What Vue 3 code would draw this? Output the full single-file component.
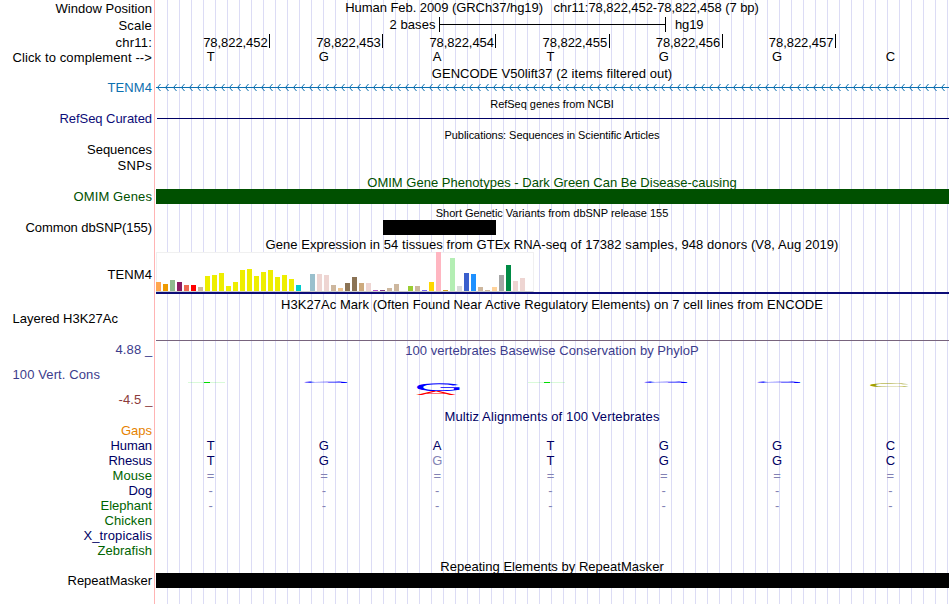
<script setup>
const genome = ['T', 'G', 'A', 'T', 'G', 'G', 'C']
const coords = ['78,822,452', '78,822,453', '78,822,454', '78,822,455', '78,822,456', '78,822,457']
const position = 'Human Feb. 2009 (GRCh37/hg19)   chr11:78,822,452-78,822,458 (7 bp)'

// Spreads a line of text over the given advance width.
const vFit = {
  mounted(el, { value }) {
    if (!value) return
    const natural = el.getBoundingClientRect().width
    const count = el.textContent.length
    el.style.letterSpacing = `${(value - natural) / count}px`
  },
}

const arrows = Array.from({ length: 100 }, (_, i) => {
  const x = 1.5 + i * 8
  return `M${x + 3} 4l-3 3.5l3 3.5`
}).join('')

const species = [
  { name: 'Gaps', w: 31, tone: 'orange', cells: [] },
  { name: 'Human', w: 41.5, tone: 'navy', cells: genome },
  { name: 'Rhesus', w: 43.5, tone: 'navy', cells: ['T', 'G', 'g', 'T', 'G', 'G', 'C'] },
  { name: 'Mouse', w: 39.5, tone: 'forest', cells: Array(7).fill('=') },
  { name: 'Dog', w: 23.5, tone: 'navy', cells: Array(7).fill('-') },
  { name: 'Elephant', w: 51.5, tone: 'forest', cells: Array(7).fill('-') },
  { name: 'Chicken', w: 47.5, tone: 'forest', cells: [] },
  { name: 'X_tropicalis', w: 68.5, tone: 'navy', cells: [] },
  { name: 'Zebrafish', w: 54.5, tone: 'forest', cells: [] },
]

// Tissue expression: [height, colour] in display order.
const tissues = [
  [9, '#ffa54f'], [7, '#ee9a00'], [11, '#8fbc8f'], [9, '#8b1c62'], [6, '#ee6a50'], [6, '#ff0000'],
  [4, '#cdb79e'], [15, '#eeee00'], [16, '#eeee00'], [18, '#eeee00'], [5, '#eeee00'], [9, '#eeee00'],
  [21, '#eeee00'], [22, '#eeee00'], [15, '#eeee00'], [19, '#eeee00'], [21, '#eeee00'], [14, '#eeee00'],
  [16, '#eeee00'], [12, '#eeee00'], [6, '#00cdcd'], [0, '#ee82ee'], [17, '#9ac0cd'], [17, '#eed5d2'],
  [16, '#eed5d2'], [6, '#cdb79e'], [3, '#eec591'], [8, '#8b7355'], [14, '#8b7355'], [8, '#cdaa7d'],
  [8, '#eed5d2'], [1, '#b452cd'], [1, '#7a378b'], [3, '#cdb79e'], [7, '#cdb79e'], [0, '#cdb79e'],
  [5, '#9acd32'], [5, '#cdb79e'], [1, '#7a67ee'], [9, '#ffd700'], [39, '#ffb6c1'], [1, '#cd9b1d'],
  [33, '#b4eeb4'], [5, '#d9d9d9'], [18, '#3a5fcd'], [17, '#1e90ff'], [4, '#cdb79e'], [1, '#cdb79e'],
  [4, '#ffd39b'], [16, '#a6a6a6'], [26, '#008b45'], [10, '#eed5d2'], [13, '#eed5d2'], [0, '#ff00ff'],
]

const logo = [
  { c: 'G', fill: '#0000ff', m: 'matrix(6.5 0 0 .26 145.2 41.9)' },
  { c: 'A', fill: '#ff0000', m: 'matrix(6 0 0 .6 260 54)' },
  { c: 'G', fill: '#0000ff', m: 'matrix(6.5 0 0 1.1 257.8 50)' },
  { c: 'G', fill: '#0000ff', m: 'matrix(6.5 0 0 .26 485.2 41.9)' },
  { c: 'G', fill: '#0000ff', m: 'matrix(6.5 0 0 .26 598.2 41.9)' },
  { c: 'C', fill: '#a0a000', m: 'matrix(6.1 0 0 .54 711 46)' },
]
// Near-zero scores collapse to a one pixel dash.
const flat = [32, 372]
</script>

<template>
  <main class="browser">
    <div class="row h17">
      <div class="label low"><span v-fit="96.5">Window Position</span></div>
      <div class="title"><span v-fit="413.5">{{ position }}</span></div>
    </div>
    <div class="row h18">
      <div class="label low"><span v-fit="33.5">Scale</span></div>
      <div class="scale">
        <span v-fit="46">2 bases</span>
        <i class="ruler"></i>
        <span v-fit="28.5">hg19</span>
      </div>
    </div>
    <div class="row h14">
      <div class="label"><span v-fit="36.5">chr11:</span></div>
      <div class="coords">
        <div v-for="c in coords" :key="c"><span v-fit="64.5">{{ c }}</span></div>
      </div>
    </div>
    <div class="row h17">
      <div class="label low"><span v-fit="139.5">Click to complement --&gt;</span></div>
      <div class="bases">
        <span v-for="(b, i) in genome" :key="i">{{ b }}</span>
      </div>
    </div>

    <div class="row h14"><div class="title wide"><span v-fit="240.5">GENCODE V50lift37 (2 items filtered out)</span></div></div>
    <div class="row h16 teal">
      <div class="label"><span v-fit="44.5">TENM4</span></div>
      <svg class="gene" width="793" height="16" viewBox="0 0 793 16">
        <path d="M0 7.5H793" /><path :d="arrows" />
      </svg>
    </div>

    <div class="row h15"><div class="title wide small"><span v-fit="123.5">RefSeq genes from NCBI</span></div></div>
    <div class="row h16 refseq">
      <div class="label"><span v-fit="92.5">RefSeq Curated</span></div>
      <i class="line"></i>
    </div>

    <div class="row h15"><div class="title wide small"><span v-fit="215">Publications: Sequences in Scientific Articles</span></div></div>
    <div class="row h16"><div class="label"><span v-fit="65">Sequences</span></div></div>
    <div class="row h17"><div class="label"><span v-fit="34.5">SNPs</span></div></div>

    <div class="row h14 omim"><div class="title wide"><span v-fit="369.5">OMIM Gene Phenotypes - Dark Green Can Be Disease-causing</span></div></div>
    <div class="row h16 omim">
      <div class="label"><span v-fit="78.5">OMIM Genes</span></div>
      <i class="block"></i>
    </div>

    <div class="row h15"><div class="title wide small"><span v-fit="232.5">Short Genetic Variants from dbSNP release 155</span></div></div>
    <div class="row h17">
      <div class="label"><span v-fit="126.5">Common dbSNP(155)</span></div>
      <i class="block variant"></i>
    </div>

    <div class="row h15"><div class="title wide"><span v-fit="573">Gene Expression in 54 tissues from GTEx RNA-seq of 17382 samples, 948 donors (V8, Aug 2019)</span></div></div>
    <div class="row h45">
      <div class="label mid"><span v-fit="44.5">TENM4</span></div>
      <div class="gtex">
        <div class="bars">
          <i v-for="(t, i) in tissues" :key="i" :style="{ height: t[0] + 'px', background: t[1] }"></i>
        </div>
        <i class="gene-model"></i>
      </div>
    </div>

    <div class="row h14"><div class="title wide"><span v-fit="542">H3K27Ac Mark (Often Found Near Active Regulatory Elements) on 7 cell lines from ENCODE</span></div></div>
    <div class="row h31">
      <div class="label start"><span v-fit="105.5">Layered H3K27Ac</span></div>
      <i class="line mark"></i>
    </div>

    <div class="row h67 cons">
      <div class="axis">
        <span v-fit="37">4.88 _</span>
        <span v-fit="87.5" class="name">100 Vert. Cons</span>
        <span v-fit="34" class="min">-4.5 _</span>
      </div>
      <div class="phylop">
        <div class="title"><span v-fit="293.5">100 vertebrates Basewise Conservation by PhyloP</span></div>
        <svg width="793" height="66" viewBox="0 1 793 66">
          <g v-for="x in flat" :key="x" class="flat">
            <rect :x="x" y="41" width="37" height="1" opacity=".15" />
            <rect :x="x + 16" y="41" width="6" height="1" />
          </g>
          <text v-for="(l, i) in logo" :key="i" :fill="l.fill" :transform="l.m">{{ l.c }}</text>
        </svg>
      </div>
    </div>

    <div class="row h14 navy"><div class="title wide"><span v-fit="215">Multiz Alignments of 100 Vertebrates</span></div></div>
    <div v-for="s in species" :key="s.name" class="row h15" :class="s.tone">
      <div class="label"><span v-fit="s.w">{{ s.name }}</span></div>
      <div class="bases aligned">
        <span v-for="(b, i) in s.cells" :key="i" :class="{ dim: 'g=-'.includes(b) }">{{ b.toUpperCase() }}</span>
      </div>
    </div>

    <div class="row repeats"><div class="title wide"><span v-fit="223.5">Repeating Elements by RepeatMasker</span></div></div>
    <div class="row h16">
      <div class="label"><span v-fit="84.5">RepeatMasker</span></div>
      <i class="block"></i>
    </div>
  </main>
</template>

<style>
body {
  margin: 0;
  background: #fff;
}
</style>

<style scoped>
.browser {
  width: 950px;
  height: 604px;
  overflow: hidden;
  font: 13px/15px "Liberation Sans", Arial, sans-serif;
  color: #000;
  background:
    linear-gradient(#ffb4b4, #ffb4b4) 154px 0 / 1px 100% no-repeat,
    linear-gradient(to right, #dcdcf5 1px, transparent 1px) 167px 0 / 12px 100% repeat-x,
    #fff;
  position: relative;
  isolation: isolate;
}
.browser::before {
  content: "";
  position: absolute;
  z-index: -1;
  inset: 0 auto 0 0;
  width: 154px;
  background: #fff;
}
.browser::after {
  content: "";
  position: absolute;
  z-index: -1;
  inset: 0 auto 0 155px;
  width: 6px;
  background: #fff;
}
.row {
  display: grid;
  grid-template-columns: 152px 793px;
  column-gap: 4px;
  align-items: start;
  white-space: pre;
}
.h14 { height: 14px; }
.h15 { height: 15px; }
.h16 { height: 16px; }
.h17 { height: 17px; }
.h18 { height: 18px; }
.h31 { height: 31px; }
.h45 { height: 45px; }
.h67 { height: 67px; }
.repeats { height: 14px; padding-top: 1px; }
.label {
  display: flex;
  justify-content: flex-end;
}
.low { padding-top: 1px; }
.mid { padding-top: 15px; }
.start {
  justify-content: flex-start;
  padding-left: 12.5px;
}
.title {
  display: flex;
  justify-content: center;
  padding-right: 1px;
}
.wide { grid-column: 2; }
.small {
  font-size: 11px;
  line-height: 16px;
}
.teal { color: #0c70b0; }
.refseq { color: #0c0c78; }
.omim { color: #005000; }
.navy { color: #000064; }
.forest { color: #006400; }
.orange { color: #e68200; }

.scale {
  display: flex;
  padding-left: 233.5px;
}
.ruler {
  box-sizing: border-box;
  width: 227px;
  height: 15px;
  margin: 0 9px 0 3.5px;
  border: solid #000;
  border-width: 0 1px;
  background: linear-gradient(#000, #000) 0 7px / 100% 1px no-repeat;
}
.coords {
  display: grid;
  grid-template-columns: repeat(6, 113.15px);
  padding-left: 1px;
}
.coords div {
  display: flex;
  justify-content: flex-end;
  height: 14px;
  padding-right: 1.5px;
  border-right: 1px solid #000;
  margin-top: -1px;
  padding-top: 1px;
  box-sizing: border-box;
}
.bases {
  display: grid;
  grid-template-columns: repeat(7, 1fr);
  text-align: center;
  margin-left: -2px;
  margin-right: 2px;
}
.aligned { color: #000064; }
.dim { color: #8282b4; }

.gene {
  fill: none;
  stroke: currentColor;
  stroke-width: 1;
}
.line {
  height: 1px;
  margin: 7px 0 0 1px;
  background: #000064;
}
.mark {
  margin: 29px 0 0;
  background: #78647d;
}
.block {
  height: 15px;
  background: currentColor;
}
.variant {
  width: 113px;
  margin-left: 227px;
}
.bars {
  box-sizing: border-box;
  width: 378px;
  height: 40px;
  display: flex;
  align-items: flex-end;
  gap: 2px;
  background: #fff;
  border: solid #f0f0f0;
  border-width: 1px 1px 0 0;
  border-bottom: 1px solid #ccc;
  box-shadow: inset 1px 0 #f0f0f0;
}
.bars i {
  width: 5px;
  flex: none;
}
.bars i:last-child {
  width: 0;
}
.gene-model {
  display: block;
  height: 2px;
  background: #0c0c78;
}

.cons { color: #3c3c8c; }
.axis {
  display: flex;
  flex-direction: column;
  align-items: flex-end;
  gap: 10px;
}
.axis span:first-child,
.axis .min { margin-right: -.5px; }
.axis .name {
  align-self: flex-start;
  margin-left: 12.5px;
}
.min { color: #8c3c3c; }
.flat { fill: #00dc00; }
.phylop {
  display: grid;
}
.phylop > * {
  grid-area: 1 / 1;
}
.phylop .title { padding-top: 1px; }
.phylop svg text {
  font-size: 10px;
  text-rendering: geometricPrecision;
}
</style>
